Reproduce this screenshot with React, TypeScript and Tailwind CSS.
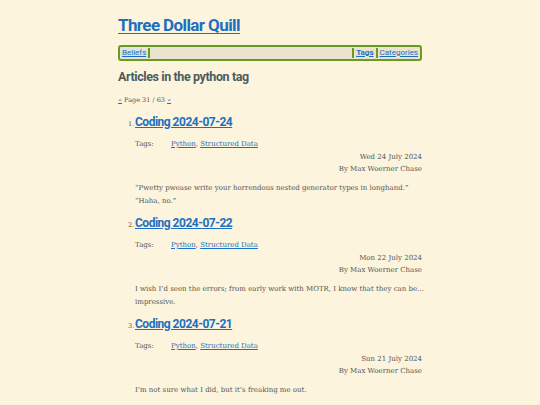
import React from "react";

const head = { fontFamily: "Roboto, 'Noto Sans', sans-serif" };
const body = { fontFamily: "'DejaVu Serif', serif" };

type Item = { title: string; date: string; excerpt: string[] };

const items: Item[] = [
  {
    title: "Coding 2024-07-24",
    date: "Wed 24 July 2024",
    excerpt: [
      "\u201cPwetty pwease write your horrendous nested generator types in longhand.\u201d",
      "\u201cHaha, no.\u201d",
    ],
  },
  {
    title: "Coding 2024-07-22",
    date: "Mon 22 July 2024",
    excerpt: [
      "I wish I\u2019d seen the errors; from early work with MOTR, I know that they can be\u2026",
      "impressive.",
    ],
  },
  {
    title: "Coding 2024-07-21",
    date: "Sun 21 July 2024",
    excerpt: ["I\u2019m not sure what I did, but it\u2019s freaking me out."],
  },
];

export default function App() {
  return (
    <div className="min-h-screen bg-[#fcf4dc] text-[#555555]">
      <div className="mx-auto w-[304px] pt-[13px]">
        <h1
          className="text-[17px] font-bold leading-[24px] tracking-[-0.6px] text-[#1c6fc1] underline underline-offset-2"
          style={head}
        >
          <a href="#">Three Dollar Quill</a>
        </h1>
        <nav
          className="mt-[8px] flex h-[16px] items-stretch rounded-[3px] border-2 border-[#6b9a22] bg-[#e9e3cf] py-[1px] text-[8px] leading-[10px]"
          style={head}
        >
          <a href="#" className="px-[2px] text-[#1c6fc1] underline bg-[#dfe4dc]">
            Beliefs
          </a>
          <div className="flex-1 border-x-2 border-[#6b9a22]" />
          <a href="#" className="px-[2px] font-bold text-[#1c6fc1] underline">
            Tags
          </a>
          <a href="#" className="border-l-2 border-[#6b9a22] px-[2px] text-[#1c6fc1] underline">
            Categories
          </a>
        </nav>
        <h2
          className="mt-[8px] text-[12.5px] font-bold leading-[16px] tracking-[-0.4px] text-[#4c5b61]"
          style={head}
        >
          Articles in the python tag
        </h2>
        <div className="mt-[10px] text-[6.5px] leading-[10px] text-[#555]" style={body}>
          <a href="#" className="text-[#1c6fc1] underline">
            «
          </a>{" "}
          Page 31 / 63{" "}
          <a href="#" className="text-[#1c6fc1] underline">
            »
          </a>
        </div>
        <ol className="mt-[9px] pl-[17px]">
          {items.map((it, i) => (
            <li key={i} className="pb-[7px]">
              <div className="flex items-baseline">
                <span className="-ml-[7px] w-[7px] text-[6.5px] text-[#555]" style={body}>
                  {i + 1}.
                </span>
                <a
                  href="#"
                  className="text-[12px] font-bold leading-[16px] tracking-[-0.5px] text-[#1c6fc1] underline"
                  style={head}
                >
                  {it.title}
                </a>
              </div>
              <div className="mt-[9px] flex text-[7px] leading-[10px]" style={body}>
                <span className="w-[36px]">Tags:</span>
                <span>
                  <a href="#" className="text-[#1c6fc1] underline">
                    Python
                  </a>
                  ,{" "}
                  <a href="#" className="text-[#1c6fc1] underline">
                    Structured Data
                  </a>
                </span>
              </div>
              <div className="mt-[1.5px] text-right text-[7px] leading-[12.5px]" style={body}>
                <div>{it.date}</div>
                <div>By Max Woerner Chase</div>
              </div>
              <div className="mt-[6.5px] text-[7px] leading-[13px]" style={body}>
                {it.excerpt.map((l, j) => (
                  <div key={j} className="whitespace-nowrap">
                    {l}
                  </div>
                ))}
              </div>
            </li>
          ))}
        </ol>
      </div>
    </div>
  );
}
